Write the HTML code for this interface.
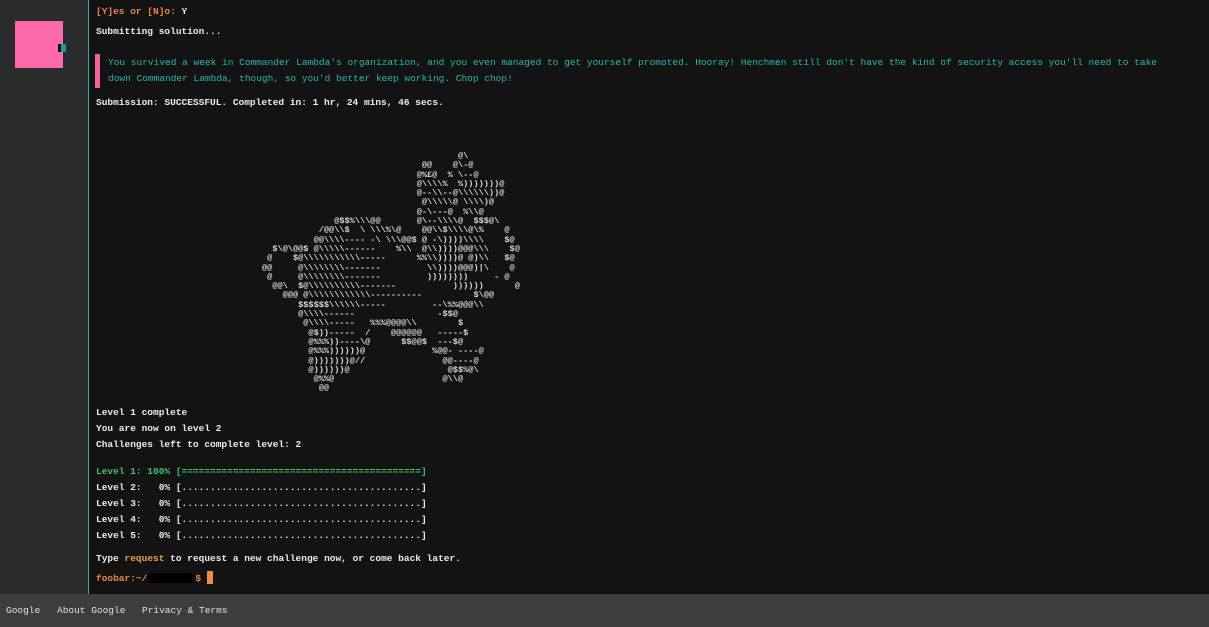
<!DOCTYPE html>
<html><head><meta charset="utf-8"><style>
html,body{margin:0;padding:0;width:1209px;height:627px;overflow:hidden;background:#131313;font-family:"Liberation Mono","DejaVu Sans Mono",monospace;}
#side{position:absolute;left:0;top:0;width:88px;height:594px;background:#2a2b2b;border-right:1px solid #3aa8a0;}
#pink{position:absolute;left:15px;top:21px;width:48px;height:47px;background:#fb6aa8;}
#mark{position:absolute;left:58px;top:44px;width:8px;height:8px;background:#1c9a9a;border-left:3px solid #111;box-sizing:border-box;}
.t{position:absolute;left:96px;font-size:9.5px;color:#ececec;white-space:pre;line-height:16px;font-weight:bold;}
.o{color:#e8854a}.g{color:#3cbf6c}.c{color:#2cb5b0}.y{color:#e6a24a}
#quote{position:absolute;left:95px;top:54px;width:5px;height:34px;background:#f0609f;}
#art{position:absolute;left:262px;top:152px;font-size:8.6px;line-height:9.3px;color:#d8d8d8;white-space:pre;margin:0;font-family:"Liberation Mono",monospace;font-weight:bold;}
#foot{position:absolute;left:0;top:594px;width:1209px;height:33px;background:#3d3d3d;color:#e0e0e0;font-size:9.5px;}
#foot span{position:absolute;top:11px;}
#cur{display:inline-block;width:6px;height:13px;background:#f08a4a;vertical-align:-3px;}
#blk{display:inline-block;width:48px;height:10px;background:#000;border-radius:5px;vertical-align:-2px;}
</style></head><body>
<div id="side"><div id="pink"></div><div id="mark"></div></div>
<div class="t" style="top:4px"><span class="o">[Y]es or [N]o:</span> Y</div>
<div class="t" style="top:24px">Submitting solution...</div>
<div id="quote"></div>
<div class="t c" style="left:108px;top:55px;font-weight:normal">You survived a week in Commander Lambda's organization, and you even managed to get yourself promoted. Hooray! Henchmen still don't have the kind of security access you'll need to take
down Commander Lambda, though, so you'd better keep working. Chop chop!</div>
<div class="t" style="top:95px">Submission: SUCCESSFUL. Completed in: 1 hr, 24 mins, 46 secs.</div>
<pre id="art">                                      @\
                               @@    @\-@
                              @%£@  % \--@
                              @\\\\%  %)))))))@
                              @--\\--@\\\\\\))@
                               @\\\\\@ \\\\)@
                              @-\---@  %\\@
              @$$%\\\@@       @\--\\\\@  $$$@\
           /@@\\$  \ \\\%\@    @@\\$\\\\@\%    @
          @@\\\\---- -\ \\\@@$ @ -\))))\\\\    $@
  $\@\@@$ @\\\\\------    %\\  @\\))))@@@\\\    $@
 @    $@\\\\\\\\\\\-----      %%\\))))@ @)\\   $@
@@     @\\\\\\\\-------         \\))))@@@)|\    @
 @     @\\\\\\\\-------         ))))))))     - @
  @@\  $@\\\\\\\\\\-------           ))))))      @
    @@@ @\\\\\\\\\\\\----------          $\@@
       $$$$$$\\\\\\-----         --\%%@@@\\
       @\\\\------                -$$@
        @\\\\-----   %%%@@@@\\        $
         @$))-----  /    @@@@@@   -----$
         @%%%))----\@      $$@@$  ---$@
         @%%%))))))@             %@@- ----@
         @)))))))@//               @@----@
         @))))))@                   @$$%@\
          @%%@                     @\\@
           @@</pre>
<div class="t" style="top:405px">Level 1 complete</div>
<div class="t" style="top:421px">You are now on level 2</div>
<div class="t" style="top:437px">Challenges left to complete level: 2</div>
<div class="t g" style="top:464px">Level 1: 100% [==========================================]</div>
<div class="t" style="top:480px">Level 2:   0% [..........................................]</div>
<div class="t" style="top:496px">Level 3:   0% [..........................................]</div>
<div class="t" style="top:512px">Level 4:   0% [..........................................]</div>
<div class="t" style="top:528px">Level 5:   0% [..........................................]</div>
<div class="t" style="top:551px">Type <span class="y">request</span> to request a new challenge now, or come back later.</div>
<div class="t" style="top:571px"><span class="o">foobar:~/</span><span id="blk"></span><span class="o">$</span> <span id="cur"></span></div>
<div id="foot"><span style="left:6px">Google</span><span style="left:57px">About Google</span><span style="left:142px">Privacy &amp; Terms</span></div>
</body></html>
